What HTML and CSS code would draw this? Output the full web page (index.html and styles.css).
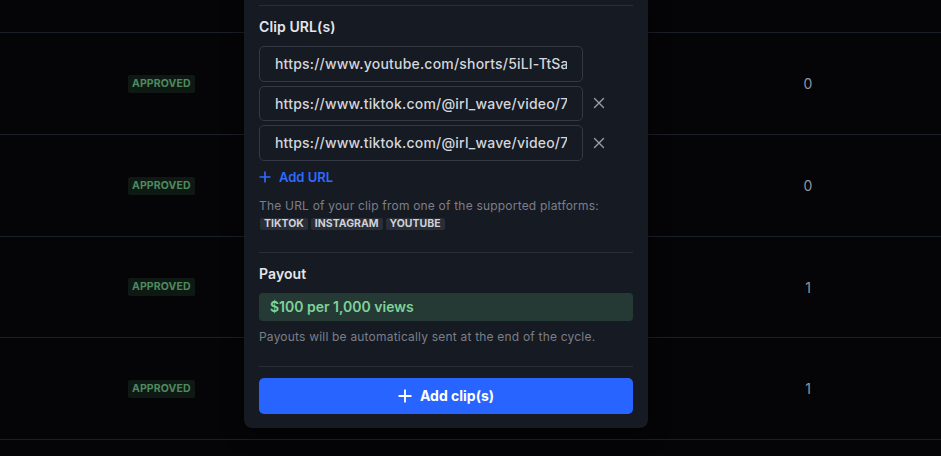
FILE: index.html
```html
<!DOCTYPE html>
<html>
<head>
<meta charset="utf-8">
<link rel="stylesheet" href="styles.css">
</head>
<body>
<div class="page">
  <div class="table">
    <div class="row row-top"></div>
    <div class="row"><div class="c-status"><span class="badge">APPROVED</span></div><div class="c-num">0</div></div>
    <div class="row"><div class="c-status"><span class="badge">APPROVED</span></div><div class="c-num">0</div></div>
    <div class="row row-short"><div class="c-status"><span class="badge">APPROVED</span></div><div class="c-num">1</div></div>
    <div class="row"><div class="c-status"><span class="badge">APPROVED</span></div><div class="c-num">1</div></div>
    <div class="row"></div>
  </div>

  <div class="modal">
    <div class="section">
      <div class="label">Clip URL(s)</div>
      <div class="inputs">
        <div class="irow"><input class="url" type="text" value="https://www.youtube.com/shorts/5iLI-TtSaQk"><span class="slot"></span></div>
        <div class="irow"><input class="url" type="text" value="https://www.tiktok.com/@irl_wave/video/7412"><button class="slot x" aria-label="remove"><svg width="12" height="12" viewBox="0 0 12 12"><path d="M1.5 1.5L10.5 10.5M10.5 1.5L1.5 10.5" stroke="#9a9ea6" stroke-width="1.4" stroke-linecap="round"/></svg></button></div>
        <div class="irow"><input class="url" type="text" value="https://www.tiktok.com/@irl_wave/video/7413"><button class="slot x" aria-label="remove"><svg width="12" height="12" viewBox="0 0 12 12"><path d="M1.5 1.5L10.5 10.5M10.5 1.5L1.5 10.5" stroke="#9a9ea6" stroke-width="1.4" stroke-linecap="round"/></svg></button></div>
      </div>
      <div class="add-url"><svg width="12" height="12" viewBox="0 0 12 12"><path d="M6 0.5V11.5M0.5 6H11.5" stroke="#2f6bff" stroke-width="1.6"/></svg><span>Add URL</span></div>
      <div class="help">The URL of your clip from one of the supported platforms:</div>
      <div class="tags"><span class="tag">TIKTOK</span><span class="tag">INSTAGRAM</span><span class="tag">YOUTUBE</span></div>
    </div>
    <div class="section">
      <div class="label">Payout</div>
      <div class="payout">$100 per 1,000 views</div>
      <div class="note">Payouts will be automatically sent at the end of the cycle.</div>
    </div>
    <div class="section last">
      <button class="submit"><svg width="14" height="14" viewBox="0 0 14 14"><path d="M7 0.5V13.5M0.5 7H13.5" stroke="#ffffff" stroke-width="1.8"/></svg><span>Add clip(s)</span></button>
    </div>
  </div>
</div>
</body>
</html>
```

FILE: styles.css
```css
* { box-sizing: border-box; }
html, body { margin: 0; padding: 0; }
body {
  background: #050507;
  font-family: Inter, "Liberation Sans", sans-serif;
  width: 941px;
  height: 456px;
  overflow: hidden;
}
.page { position: relative; width: 941px; height: 456px; }

.table { display: flex; flex-direction: column; }
.row {
  height: 102px;
  flex: 0 0 auto;
  border-top: 1px solid #1b1f2b;
  display: flex;
  align-items: center;
}
.row-short { height: 101px; }
.row-top { height: 32px; border-top: none; }
.c-status { padding-left: 128px; flex: 0 0 300px; display: flex; }
.badge {
  display: inline-block;
  background: #0f1914;
  color: #4d8a5e;
  font-size: 10.5px;
  font-weight: 700;
  line-height: 18px;
  height: 18px;
  padding: 0 4px;
  border-radius: 2px;
  letter-spacing: 0.1px;
}
.c-num {
  margin-left: 503px;
  width: 10px;
  text-align: center;
  color: #8e96a2;
  font-size: 14px;
}

.modal {
  position: absolute;
  left: 244px;
  top: 0;
  width: 404px;
  background: #161a22;
  border-radius: 0 0 8px 8px;
  padding: 5px 15px 14px;
  box-shadow: 0 4px 20px rgba(0,0,0,0.5);
}
.section { border-top: 1px solid #2a2e38; padding-top: 11px; }
.label { color: #e4e6eb; font-size: 14px; font-weight: 600; line-height: 20px; letter-spacing: 0.1px; }
.inputs { display: flex; flex-direction: column; gap: 4px; margin-top: 9px; }
.irow { display: flex; align-items: center; }
.url {
  width: 324px;
  height: 35.5px;
  background: #161a22;
  border: 1px solid #353945;
  border-radius: 5px;
  padding: 0 15px;
  color: #d3d6dc;
  font-family: Inter, "Liberation Sans", sans-serif;
  font-size: 14px;
  font-weight: 500;
  letter-spacing: 0.2px;
  outline: none;
}
.slot { width: 32px; height: 35px; display: flex; align-items: center; justify-content: center; }
.x { background: none; border: none; padding: 0; }
.add-url {
  display: flex; align-items: center; gap: 8px;
  margin-top: 8px;
  color: #2f6bff; font-size: 13px; font-weight: 600; line-height: 16px;
}
.help { margin-top: 13px; color: #7b7f89; font-size: 12px; line-height: 16px; letter-spacing: 0.2px; }
.tags { display: flex; gap: 3px; margin-top: 4px; margin-left: 1px; margin-bottom: 22px; }
.tag {
  background: #2a2e37;
  color: #cfd2d8;
  font-size: 10.5px;
  font-weight: 700;
  line-height: 12px;
  height: 12px;
  padding: 0 4px;
  border-radius: 2px;
}
.payout {
  margin-top: 9px;
  height: 28px;
  background: #263a35;
  border-radius: 4px;
  color: #7ed39a;
  font-size: 14px;
  font-weight: 600;
  line-height: 28px;
  padding: 0 11px;
}
.note { margin-top: 8px; color: #7b7f89; font-size: 12px; line-height: 16px; margin-bottom: 21px; letter-spacing: 0.2px; }
.submit {
  width: 100%;
  height: 36px;
  background: #2864ff;
  border: none;
  border-radius: 5px;
  color: #ffffff;
  font-family: Inter, "Liberation Sans", sans-serif;
  font-size: 14px;
  font-weight: 700;
  display: flex; align-items: center; justify-content: center; gap: 8px;
}
```
